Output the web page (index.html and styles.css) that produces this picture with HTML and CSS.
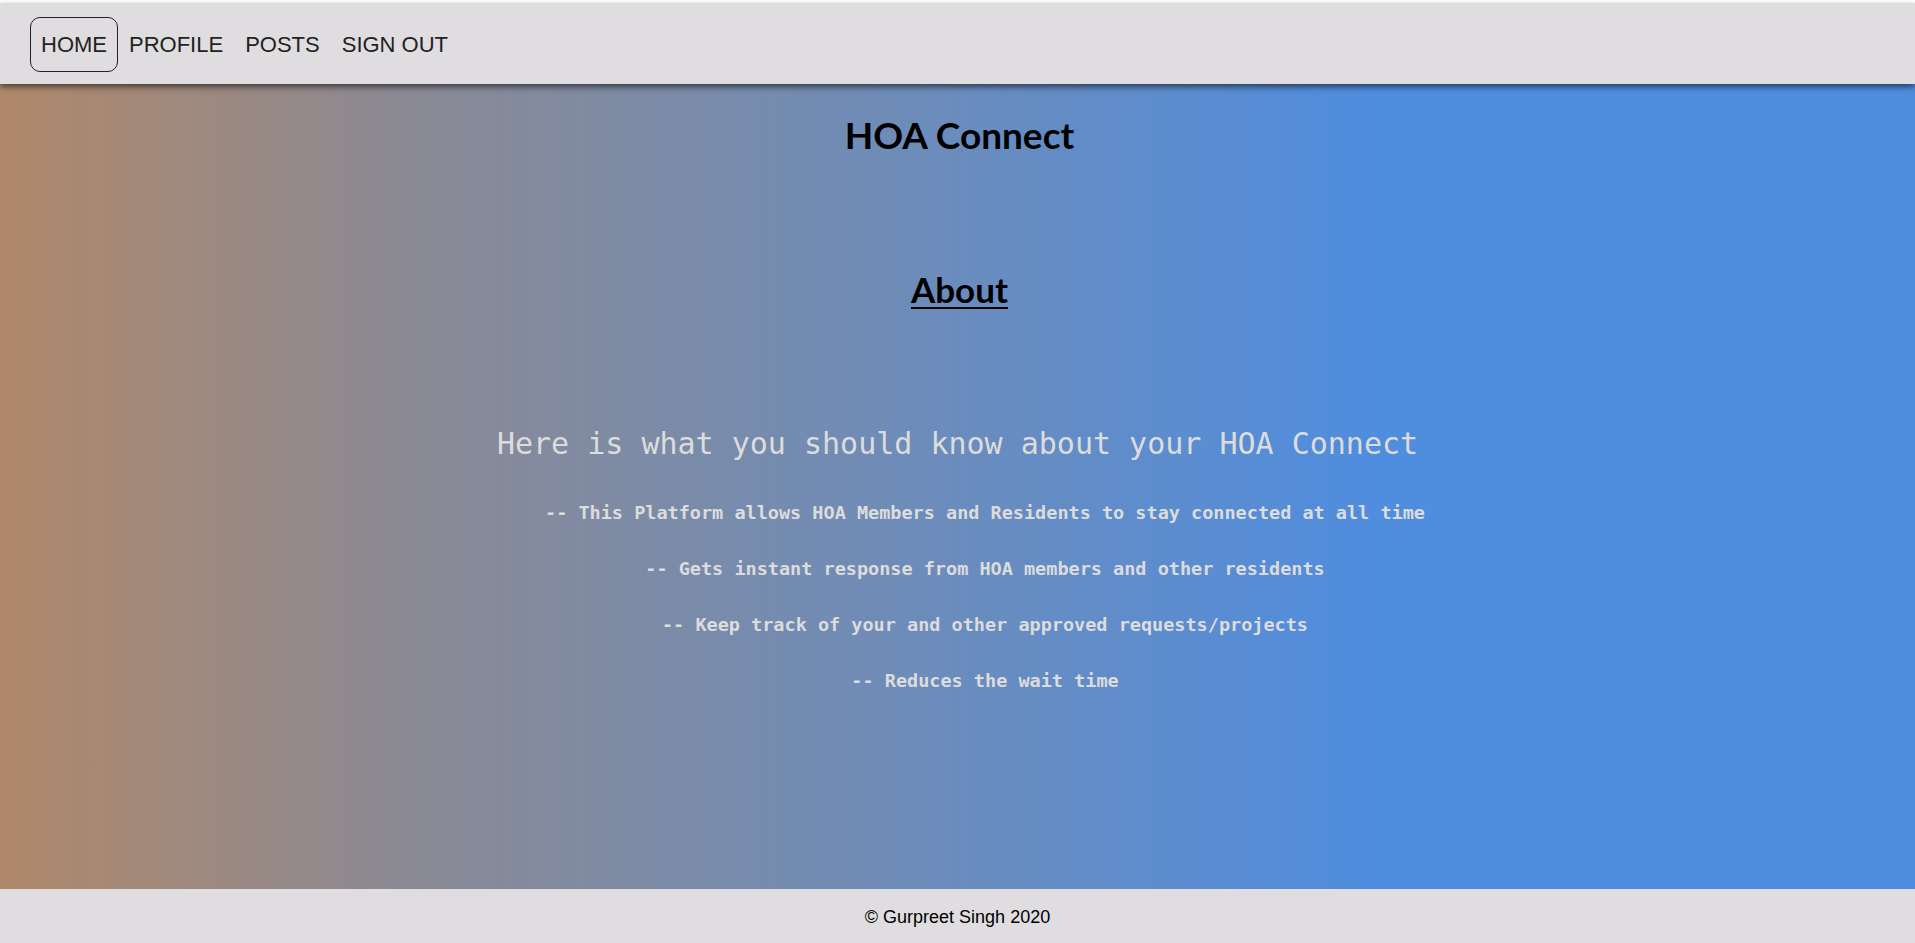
FILE: index.html
```html
<!DOCTYPE html>
<html lang="en">
<head>
<meta charset="utf-8">
<title>HOA Connect</title>
<link rel="stylesheet" href="styles.css">
</head>
<body>
<nav class="topnav">
  <a class="nav-link active" href="#">HOME</a>
  <a class="nav-link" href="#">PROFILE</a>
  <a class="nav-link" href="#">POSTS</a>
  <a class="nav-link" href="#">SIGN OUT</a>
</nav>
<main class="content">
  <h1 class="site-title">HOA Connect</h1>
  <h2 class="about-title">About</h2>
  <h3 class="intro">Here is what you should know about your HOA Connect</h3>
  <div class="points">
    <p class="point">-- This Platform allows HOA Members and Residents to stay connected at all time</p>
    <p class="point">-- Gets instant response from HOA members and other residents</p>
    <p class="point">-- Keep track of your and other approved requests/projects</p>
    <p class="point">-- Reduces the wait time</p>
  </div>
</main>
<footer class="footer">© Gurpreet Singh 2020</footer>
</body>
</html>
```

FILE: styles.css
```css
html, body {
  margin: 0;
  padding: 0;
  height: 100%;
}
body {
  background: #ffffff;
  display: flex;
  flex-direction: column;
  font-family: "Liberation Sans", Arial, sans-serif;
}
.topnav {
  margin-top: 3px;
  height: 81px;
  flex: 0 0 auto;
  background: #dfdde0;
  display: flex;
  align-items: center;
  padding-left: 30px;
  box-shadow: 0 3px 6px rgba(0, 0, 0, 0.55);
  position: relative;
  z-index: 1;
}
.nav-link {
  font-family: "Liberation Sans", Arial, sans-serif;
  font-size: 22px;
  line-height: 25px;
  color: #222222;
  text-decoration: none;
  padding: 14px 10px;
  border: 1px solid transparent;
  border-radius: 10px;
  margin-top: 1px;
}
.nav-link.active {
  border-color: #222222;
}
.content {
  flex: 1 1 auto;
  background: linear-gradient(to right, #b0886a 0%, #8b8a94 21%, #6f8cb7 46%, #4f8ddf 72%, #4f8ddf 100%);
  text-align: center;
  padding-top: 29px;
  display: flex;
  flex-direction: column;
  align-items: center;
}
.site-title {
  margin: 0;
  padding-left: 4px;
  font-family: "Comic Sans MS", "Lato", sans-serif;
  font-weight: 700;
  font-size: 37px;
  line-height: 44px;
  color: #000000;
}
.about-title {
  margin: 111px 0 0;
  padding-left: 4px;
  font-family: "Comic Sans MS", "Lato", sans-serif;
  font-weight: 700;
  font-size: 35px;
  line-height: 42px;
  color: #000000;
  text-decoration: underline;
  text-underline-offset: 4px;
  text-decoration-thickness: 2px;
}
.intro {
  margin: 116px 0 0;
  font-family: "DejaVu Sans Mono", monospace;
  font-weight: 400;
  font-size: 30px;
  line-height: 36px;
  color: #dcdcdc;
}
.points {
  margin-top: 40px;
  padding-left: 55px;
  display: flex;
  flex-direction: column;
  align-items: center;
  gap: 34px;
}
.point {
  margin: 0;
  font-family: "DejaVu Sans Mono", monospace;
  font-weight: 700;
  font-size: 18.5px;
  line-height: 22px;
  color: #dcdcdc;
}
.footer {
  flex: 0 0 auto;
  height: 54px;
  background: #dfdde0;
  display: flex;
  align-items: center;
  justify-content: center;
  padding-top: 2px;
  box-sizing: border-box;
  font-family: "Liberation Sans", Arial, sans-serif;
  font-size: 18px;
  color: #000000;
}
```
